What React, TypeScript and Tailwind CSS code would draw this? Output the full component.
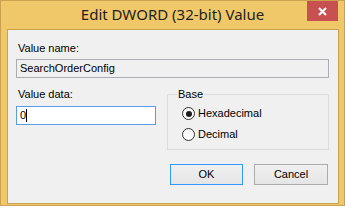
import React from "react";

const ui = { fontFamily: '"Liberation Sans", Arial, sans-serif' };
const title = { fontFamily: '"Noto Sans", "Open Sans", sans-serif' };

function Radio({ label, checked }: { label: string; checked?: boolean }) {
  return (
    <div className="flex items-center gap-[3px] h-[13px]">
      <span className="w-[13px] h-[13px] rounded-full border border-[#333] bg-gradient-to-b from-[#f6f6f6] to-[#ffffff] flex items-center justify-center">
        {checked && <span className="w-[6px] h-[6px] rounded-full bg-[#1a1a1a]" />}
      </span>
      <span className="text-[11px] leading-[13px] text-black">{label}</span>
    </div>
  );
}

export default function App() {
  return (
    <div className="w-[345px] h-[206px] bg-[#f0c869] border border-[#c9a24f] flex flex-col select-none" style={ui}>
      {/* title bar */}
      <div className="relative h-[28px] flex items-center justify-center">
        <span className="text-[15px] text-[#222] leading-none pb-[1px]" style={title}>
          Edit DWORD (32-bit) Value
        </span>
        <button className="absolute right-[6px] top-0 w-[31px] h-[20px] bg-[#c75050] flex items-center justify-center">
          <svg width="9" height="9" viewBox="0 0 9 9">
            <path d="M1 1 L8 8 M8 1 L1 8" stroke="#fff" strokeWidth="2" />
          </svg>
        </button>
      </div>

      {/* client area */}
      <div className="ml-[6px] mr-[5px] mb-[1px] flex-1 border border-[#c9a24f] bg-[#f0f0f0] pl-[8px] pr-[9px] pt-[12px] flex flex-col">
        <div className="text-[11px] leading-[13px] text-black pl-[2px]">Value name:</div>
        <div className="mt-[4px] h-[19px] border border-[#abadb3] bg-[#f0f0f0] flex items-center pl-[3px] text-[11px] text-black">
          SearchOrderConfig
        </div>

        <div className="mt-[10px] flex gap-[11px]">
          <div className="w-[140px] flex flex-col">
            <div className="text-[11px] leading-[13px] text-black pl-[2px]">Value data:</div>
            <div className="mt-[5px] h-[19px] border border-[#569de5] bg-white flex items-center pl-[3px] text-[11px] text-black">
              0<span className="w-px h-[13px] bg-black" />
            </div>
          </div>
          <fieldset className="flex-1 border border-[#dcdcdc] h-[62px] px-[14px] pt-[6px] flex flex-col gap-[8px]">
            <legend className="text-[11px] leading-[13px] text-black ml-[-5px] px-[1px]">Base</legend>
            <Radio label="Hexadecimal" checked />
            <Radio label="Decimal" />
          </fieldset>
        </div>

        <div className="mt-[14px] flex justify-end gap-[11px] pr-[1px]">
          <button className="w-[73px] h-[21px] border border-[#3399ff] bg-gradient-to-b from-[#f0f0f0] to-[#e5e5e5] text-[11px] text-black">
            OK
          </button>
          <button className="w-[74px] h-[21px] border border-[#acacac] bg-gradient-to-b from-[#f0f0f0] to-[#e5e5e5] text-[11px] text-black">
            Cancel
          </button>
        </div>
      </div>
    </div>
  );
}
